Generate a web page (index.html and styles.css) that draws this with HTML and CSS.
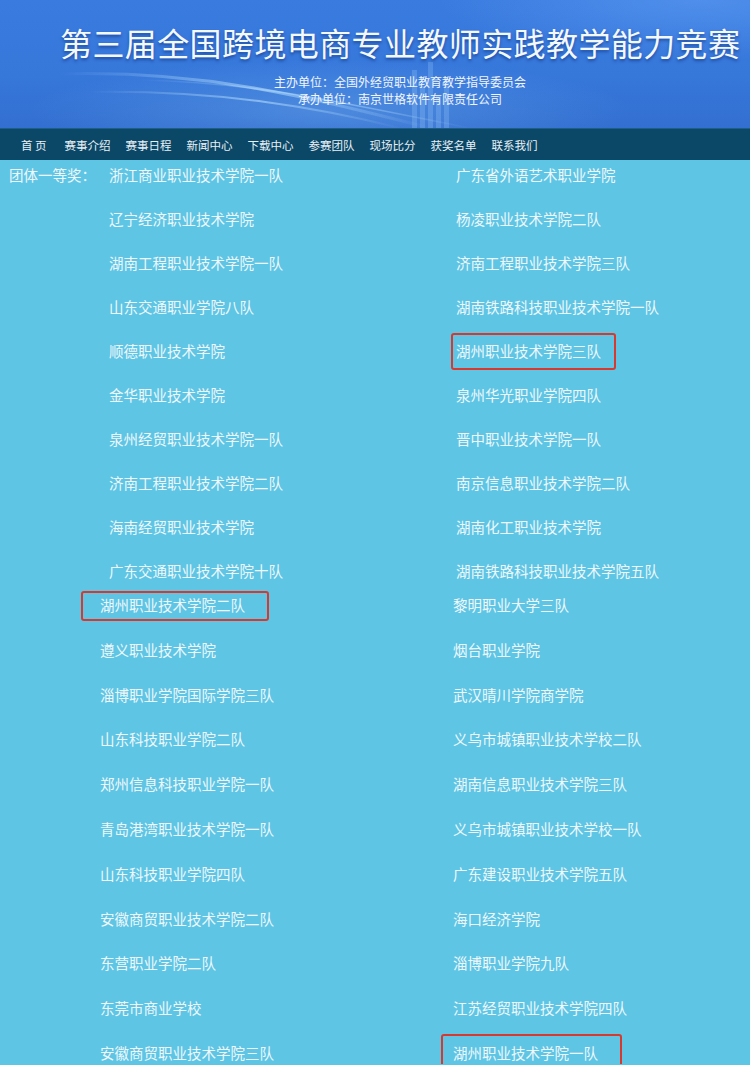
FILE: index.html
```html
<!DOCTYPE html>
<html lang="zh-CN">
<head>
    <meta charset="UTF-8">
    <meta name="viewport" content="width=device-width, initial-scale=1.0">
    <title>获奖名单 - 第三届全国跨境电商专业教师实践教学能力竞赛</title>
    <link rel="stylesheet" href="styles.css">
</head>
<body>
    <div class="banner">
        <svg class="banner-art" width="750" height="128" viewBox="0 0 750 128">
            <defs>
                <linearGradient id="sw" x1="0" x2="1" y1="0" y2="0">
                    <stop offset="0" stop-color="#bfe6ff" stop-opacity="0"/>
                    <stop offset="0.55" stop-color="#bfe6ff" stop-opacity="0.55"/>
                    <stop offset="1" stop-color="#bfe6ff" stop-opacity="0"/>
                </linearGradient>
            </defs>
            <path d="M60 74 C 200 70, 300 95, 430 128" stroke="url(#sw)" stroke-width="3" fill="none"/>
            <path d="M90 92 C 220 90, 320 108, 400 128" stroke="url(#sw)" stroke-width="2" fill="none"/>
            <path d="M140 80 C 260 82, 350 105, 470 128" stroke="url(#sw)" stroke-width="1.5" fill="none"/>
            <g fill="#9fd0ff" opacity="0.25">
                <rect x="412" y="70" width="5" height="58"/>
                <rect x="420" y="86" width="5" height="42"/>
                <rect x="428" y="62" width="5" height="66"/>
                <rect x="436" y="96" width="5" height="32"/>
                <rect x="444" y="80" width="5" height="48"/>
            </g>
        </svg>
        <h1 class="banner-title">第三届全国跨境电商专业教师实践教学能力竞赛</h1>
        <div class="banner-sub">
            <p>主办单位：全国外经贸职业教育教学指导委员会</p>
            <p>承办单位：南京世格软件有限责任公司</p>
        </div>
    </div>

    <div class="nav">
        <a href="#" class="nav-home">首 页</a>
        <a href="#">赛事介绍</a>
        <a href="#">赛事日程</a>
        <a href="#">新闻中心</a>
        <a href="#">下载中心</a>
        <a href="#">参赛团队</a>
        <a href="#">现场比分</a>
        <a href="#">获奖名单</a>
        <a href="#">联系我们</a>
    </div>

    <div class="awards">
        <div class="award-row"><span class="award-label">团体一等奖：</span><span>浙江商业职业技术学院一队</span><span>广东省外语艺术职业学院</span></div>
        <div class="award-row"><span></span><span>辽宁经济职业技术学院</span><span>杨凌职业技术学院二队</span></div>
        <div class="award-row"><span></span><span>湖南工程职业技术学院一队</span><span>济南工程职业技术学院三队</span></div>
        <div class="award-row"><span></span><span>山东交通职业学院八队</span><span>湖南铁路科技职业技术学院一队</span></div>
        <div class="award-row"><span></span><span>顺德职业技术学院</span><span><em class="mark mark-a">湖州职业技术学院三队</em></span></div>
        <div class="award-row"><span></span><span>金华职业技术学院</span><span>泉州华光职业学院四队</span></div>
        <div class="award-row"><span></span><span>泉州经贸职业技术学院一队</span><span>晋中职业技术学院一队</span></div>
        <div class="award-row"><span></span><span>济南工程职业技术学院二队</span><span>南京信息职业技术学院二队</span></div>
        <div class="award-row"><span></span><span>海南经贸职业技术学院</span><span>湖南化工职业技术学院</span></div>
        <div class="award-row"><span></span><span>广东交通职业技术学院十队</span><span>湖南铁路科技职业技术学院五队</span></div>
    </div>

    <div class="awards awards-more">
        <div class="award-row"><span><em class="mark mark-b">湖州职业技术学院二队</em></span><span>黎明职业大学三队</span></div>
        <div class="award-row"><span>遵义职业技术学院</span><span>烟台职业学院</span></div>
        <div class="award-row"><span>淄博职业学院国际学院三队</span><span>武汉晴川学院商学院</span></div>
        <div class="award-row"><span>山东科技职业学院二队</span><span>义乌市城镇职业技术学校二队</span></div>
        <div class="award-row"><span>郑州信息科技职业学院一队</span><span>湖南信息职业技术学院三队</span></div>
        <div class="award-row"><span>青岛港湾职业技术学院一队</span><span>义乌市城镇职业技术学校一队</span></div>
        <div class="award-row"><span>山东科技职业学院四队</span><span>广东建设职业技术学院五队</span></div>
        <div class="award-row"><span>安徽商贸职业技术学院二队</span><span>海口经济学院</span></div>
        <div class="award-row"><span>东营职业学院二队</span><span>淄博职业学院九队</span></div>
        <div class="award-row"><span>东莞市商业学校</span><span>江苏经贸职业技术学院四队</span></div>
        <div class="award-row"><span>安徽商贸职业技术学院三队</span><span><em class="mark mark-c">湖州职业技术学院一队</em></span></div>
    </div>
</body>
</html>
```

FILE: styles.css
```css
body {
    margin: 0;
    background-color: #5ec5e4;
    font-family: "Noto Sans CJK SC", "Noto Sans", sans-serif;
    color: #eef8fc;
    overflow: hidden;
}

/* banner */
.banner {
    position: relative;
    height: 128px;
    overflow: hidden;
    background:
        radial-gradient(ellipse 260px 60px at 700px 0, rgba(120, 180, 255, 0.35), transparent),
        radial-gradient(ellipse 300px 50px at 330px 110px, rgba(150, 210, 255, 0.25), transparent),
        linear-gradient(180deg, #3a7be0 0%, #3677da 60%, #336fd0 100%);
}

.banner-art {
    position: absolute;
    left: 0;
    top: 0;
}

.banner-title {
    position: relative;
    margin: 0;
    padding: 22px 0 0 60px;
    font-size: 32px;
    font-weight: normal;
    line-height: 40px;
    letter-spacing: 0.4px;
    color: #f4f8ff;
    white-space: nowrap;
    text-shadow: 0 2px 3px rgba(10, 40, 110, 0.55);
}

.banner-sub {
    position: relative;
    width: 400px;
    margin: 11px 0 0 200px;
    text-align: center;
    font-size: 12px;
    line-height: 17px;
    color: #f2f6ff;
}

.banner-sub p {
    margin: 0;
}

/* nav */
.nav {
    display: flex;
    gap: 15px;
    height: 32px;
    align-items: center;
    padding-left: 21px;
    background-color: #0b4868;
    border-top: 1px solid #1b5f86;
    box-sizing: border-box;
}

.nav a {
    font-size: 11.5px;
    color: #e9f0f4;
    text-decoration: none;
    white-space: pre;
}

.nav .nav-home {
    margin-right: 3px;
}

/* award list */
.awards {
    display: grid;
    row-gap: 22px;
    padding: 4px 0 0 9px;
    font-size: 14.5px;
    line-height: 22px;
}

.award-row {
    display: grid;
    grid-template-columns: 100px 347px 1fr;
    white-space: nowrap;
}

.awards-more {
    row-gap: 22.8px;
    padding: 12px 0 0 100px;
}

.awards-more .award-row {
    grid-template-columns: 353px 1fr;
}

.mark {
    display: inline-block;
    font-style: normal;
    border: 2px solid #d8392e;
    border-radius: 3px;
}

.mark-a {
    padding: 5px 13px 6px 3px;
    margin: -7px 0 -8px -5px;
}

.mark-b {
    padding: 1px 22px 3px 17px;
    margin: -3px 0 -5px -19px;
}

.mark-c {
    padding: 6px 22px 6px 10px;
    margin: -8px 0 -8px -12px;
}
```
